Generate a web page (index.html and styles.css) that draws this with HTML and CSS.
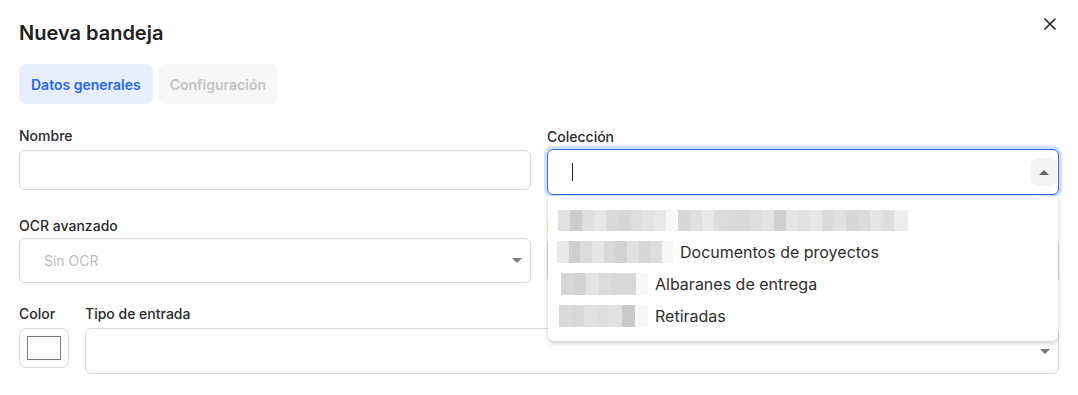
FILE: index.html
```html
<!DOCTYPE html>
<html lang="es">
<head>
    <meta charset="UTF-8">
    <meta name="viewport" content="width=device-width, initial-scale=1.0">
    <title>Nueva bandeja</title>
    <link rel="stylesheet" href="styles.css">
</head>
<body>
    <div class="modal">
        <div class="modal-header">
            <h2 class="modal-title">Nueva bandeja</h2>
            <button class="close-btn" aria-label="Cerrar">
                <svg width="12" height="12" viewBox="0 0 12 12">
                    <path d="M1 1 L11 11 M11 1 L1 11" stroke="#222" stroke-width="1.6" stroke-linecap="round"/>
                </svg>
            </button>
        </div>

        <div class="tabs">
            <button class="tab tab-active">Datos generales</button>
            <button class="tab tab-disabled">Configuración</button>
        </div>

        <div class="form-grid">
            <div class="field">
                <label class="field-label">Nombre</label>
                <div class="input"></div>
            </div>

            <div class="field field-open">
                <label class="field-label label-select">Colección</label>
                <div class="select select-focus">
                    <span class="caret"></span>
                    <span class="arrow-box"><span class="tri tri-up"></span></span>
                </div>
                <!-- menú desplegable abierto -->
                <div class="dropdown">
                    <div class="option">
                        <span class="mosaic mosaic-1"></span>
                    </div>
                    <div class="option">
                        <span class="mosaic mosaic-2"></span>
                        <span class="option-text">Documentos de proyectos</span>
                    </div>
                    <div class="option option-short">
                        <span class="mosaic mosaic-3"></span>
                        <span class="option-text">Albaranes de entrega</span>
                    </div>
                    <div class="option option-short2">
                        <span class="mosaic mosaic-4"></span>
                        <span class="option-text">Retiradas</span>
                    </div>
                </div>
            </div>

            <div class="field">
                <label class="field-label label-select">OCR avanzado</label>
                <div class="select">
                    <span class="placeholder">Sin OCR</span>
                    <span class="tri tri-down"></span>
                </div>
            </div>

            <div class="field">
                <label class="field-label label-select">Idioma</label>
                <div class="select">
                    <span class="tri tri-down"></span>
                </div>
            </div>
        </div>

        <div class="form-row">
            <div class="field field-color">
                <label class="field-label">Color</label>
                <div class="color-box"><span class="swatch"></span></div>
            </div>
            <div class="field field-grow">
                <label class="field-label">Tipo de entrada</label>
                <div class="select select-tall">
                    <span class="tri tri-down"></span>
                </div>
            </div>
        </div>
    </div>
</body>
</html>
```

FILE: styles.css
```css
body {
    margin: 0;
    background-color: #fff;
    font-family: Inter, "Noto Sans", Arial, sans-serif;
    color: #222;
}

.modal {
    padding: 20px 19px 20px 19px;
    box-sizing: border-box;
    width: 1078px;
}

.modal-header {
    display: flex;
    justify-content: space-between;
    align-items: flex-start;
}

.modal-title {
    margin: 0;
    font-size: 20px;
    font-weight: 600;
    line-height: 26px;
    color: #222;
}

.close-btn {
    border: none;
    background: none;
    padding: 0;
    width: 20px;
    height: 20px;
    margin-top: -6px;
    margin-right: -1px;
    display: flex;
    align-items: center;
    justify-content: center;
    cursor: pointer;
}

/* Pestañas */
.tabs {
    display: flex;
    gap: 5px;
    margin-top: 18px;
}

.tab {
    border: none;
    height: 40px;
    padding: 0 12px;
    border-radius: 8px;
    font-family: inherit;
    font-size: 14px;
    font-weight: 600;
}

.tab-active {
    background-color: #e7eefd;
    color: #2a66f0;
}

.tab-disabled {
    background-color: #f7f7f7;
    color: #c3c3c3;
}

/* Formulario */
.form-grid {
    display: grid;
    grid-template-columns: 1fr 1fr;
    column-gap: 16px;
    row-gap: 21px;
    margin-top: 23px;
    align-items: start;
}

.field {
    display: flex;
    flex-direction: column;
    position: relative;
}

.field-label {
    font-size: 14px;
    font-weight: 500;
    line-height: 17px;
    color: #2a2a2a;
    margin-bottom: 6px;
}

.label-select {
    margin-top: 1px;
    margin-bottom: 4px;
}

.input {
    height: 40px;
    border: 1px solid #dadada;
    border-radius: 6px;
    box-sizing: border-box;
}

.select {
    height: 45px;
    border: 1px solid #dadada;
    border-radius: 6px;
    box-sizing: border-box;
    display: flex;
    align-items: center;
    justify-content: space-between;
    padding: 0 8px 0 24px;
}

.select-tall {
    height: 46px;
}

.select-focus {
    height: 46px;
    border-color: #2f6cf4;
    box-shadow: 0 0 0 3px #d3e0fc;
    padding-left: 24px;
    padding-right: 1px;
}

.caret {
    width: 1px;
    height: 18px;
    background-color: #222;
}

.arrow-box {
    width: 26px;
    height: 28px;
    background-color: #f3f3f3;
    border-radius: 7px;
    display: flex;
    align-items: center;
    justify-content: center;
}

.tri {
    width: 0;
    height: 0;
    border-left: 5px solid transparent;
    border-right: 5px solid transparent;
}

.tri-up {
    border-bottom: 5px solid #666;
}

.tri-down {
    border-top: 5px solid #777;
    margin-left: auto;
}

.placeholder {
    font-size: 14px;
    color: #bdbdbd;
}

/* Desplegable de colección */
.dropdown {
    position: absolute;
    top: 69px;
    left: 1px;
    right: 1px;
    background-color: #fff;
    border-radius: 0 0 6px 6px;
    box-shadow: 0 2px 5px rgba(0, 0, 0, 0.22);
    padding: 8px 0 9px 0;
    z-index: 2;
}

.option {
    height: 32px;
    display: flex;
    align-items: center;
    padding-left: 9px;
    gap: 7px;
    font-size: 16px;
    color: #2e2e2e;
}

.option-short {
    padding-left: 13px;
    gap: 7px;
}

.option-short2 {
    padding-left: 11px;
    gap: 7px;
}

/* bloques pixelados (contenido oculto) */
.mosaic {
    height: 22px;
    display: block;
}

.mosaic-1 {
    margin-left: 1px;
    width: 350px;
    height: 21px;
    background: linear-gradient(90deg,
        #e1e1e1 0 12px, #cdcdcd 12px 24px, #dfdfdf 24px 36px, #e7e7e7 36px 48px,
        #d9d9d9 48px 60px, #d6d6d6 60px 72px, #dddddd 72px 84px, #e3e3e3 84px 96px,
        #e9e9e9 96px 108px, #f8f8f8 108px 120px, #d7d7d7 120px 132px, #dfdfdf 132px 144px,
        #e9e9e9 144px 156px, #dcdcdc 156px 168px, #dadada 168px 180px, #d8d8d8 180px 192px,
        #dddddd 192px 204px, #e3e3e3 204px 216px, #cfcfcf 216px 228px, #e5e5e5 228px 240px,
        #e1e1e1 240px 252px, #e7e7e7 252px 264px, #dadada 264px 276px, #e1e1e1 276px 288px,
        #d7d7d7 288px 300px, #dadada 300px 312px, #e5e5e5 312px 324px, #dddddd 324px 336px,
        #ededed 336px 350px);
}

.mosaic-2 {
    width: 116px;
    background: linear-gradient(90deg,
        #e9e9e9 0 12px, #cfcfcf 12px 23px, #dcdcdc 23px 35px, #e6e6e6 35px 47px,
        #d9d9d9 47px 58px, #d3d3d3 58px 70px, #e1e1e1 70px 82px, #d6d6d6 82px 93px,
        #dedede 93px 105px, #f6f6f6 105px 116px);
}

.mosaic-3 {
    width: 87px;
    background: linear-gradient(90deg,
        #d7d7d7 0 13px, #d3d3d3 13px 25px, #e4e4e4 25px 38px, #dcdcdc 38px 50px,
        #d8d8d8 50px 75px, #f8f8f8 75px 87px);
}

.mosaic-4 {
    width: 89px;
    background: linear-gradient(90deg,
        #dadada 0 13px, #d8d8d8 13px 25px, #e2e2e2 25px 38px, #dedede 38px 50px,
        #e1e1e1 50px 63px, #c9c9c9 63px 76px, #f7f7f7 76px 89px);
}

.option-text {
    white-space: nowrap;
}

/* Fila de color y tipo de entrada */
.form-row {
    display: flex;
    gap: 16px;
    margin-top: 22px;
    align-items: flex-start;
}

.field-color {
    width: 50px;
    flex-shrink: 0;
}

.field-grow {
    flex: 1;
}

.color-box {
    width: 50px;
    height: 40px;
    border: 1px solid #dadada;
    border-radius: 8px;
    box-sizing: border-box;
    display: flex;
    align-items: center;
    justify-content: center;
}

.swatch {
    width: 32px;
    height: 22px;
    border: 1px solid #7a7a7a;
    background-color: #fff;
}
```
